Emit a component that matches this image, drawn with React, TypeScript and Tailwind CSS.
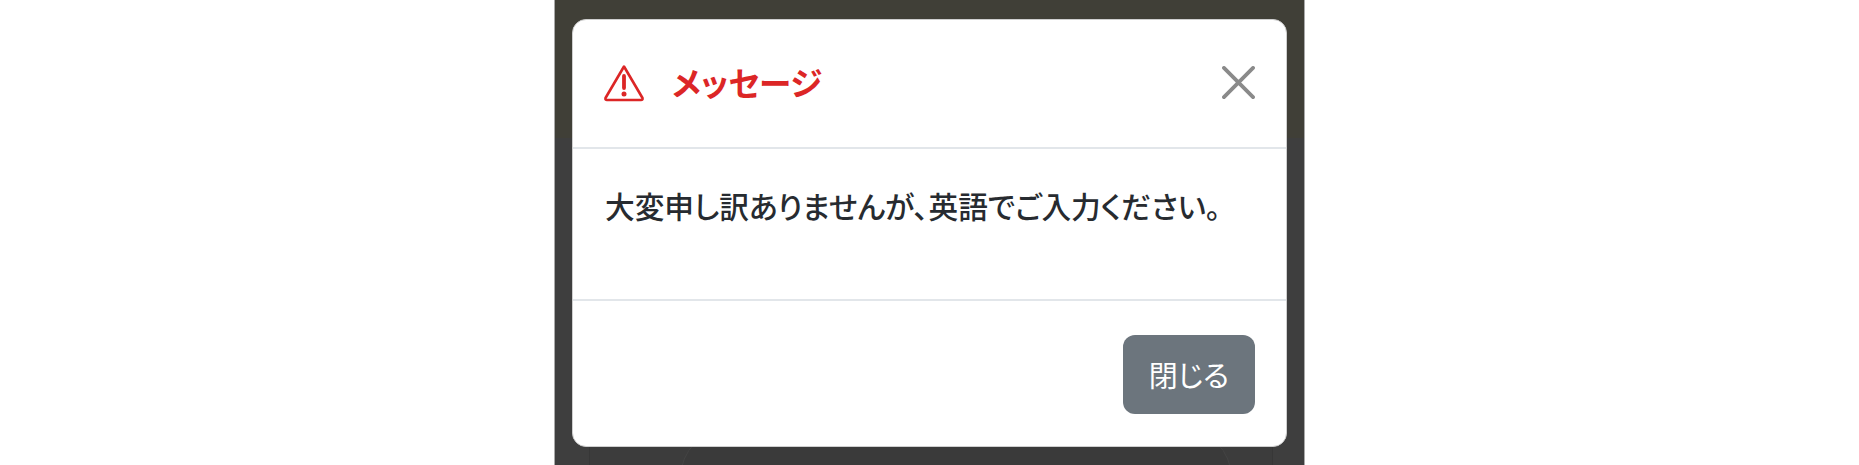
export default function App() {
  return (
    <div className="flex h-[465px] w-full justify-center overflow-hidden bg-white font-['Noto_Sans_CJK_JP',sans-serif] [font-feature-settings:'palt']">
      <div className="relative flex w-[751px] flex-col border-x border-[#a9a9a9] bg-[#3e3e3e]">
        <div className="h-[138px] bg-[#403f37]" />
        <div className="flex-1 overflow-hidden">
          <div className="ml-[34px] mr-[31px] mt-[290px] h-[60px] border-x border-[#373737] bg-[#3c3c3c] pl-[90px] pr-[40px]">
            <div className="h-[60px] rounded-t-[50px] border border-[#444444] bg-[#3a3a3a]" />
          </div>
        </div>
        <div className="absolute left-[17px] top-[19px] flex h-[428px] w-[715px] flex-col rounded-[14px] border border-[#cfcfcf] bg-white">
          <div className="flex h-[129px] items-center justify-between border-b-2 border-[#e2e6ea] pb-[2px] pl-[30px] pr-[31px]">
            <div className="flex items-center gap-[27px]">
              <svg viewBox="0 0 42 38" className="h-[38px] w-[42px]" fill="none">
                <path d="M21 2.5 L39.5 34 Q40 36 38 36 H4 Q2 36 2.5 34 Z" stroke="#dc2626" strokeWidth="2.6" strokeLinejoin="round" />
                <path d="M21 12 V24" stroke="#dc2626" strokeWidth="3.8" strokeLinecap="round" />
                <circle cx="21" cy="30" r="2.5" fill="#dc2626" />
              </svg>
              <h1 className="text-[32.5px] leading-none font-bold text-[#dc2626]">メッセージ</h1>
            </div>
            <svg viewBox="0 0 34 34" className="h-[33px] w-[33px]" fill="none">
              <path d="M2 2 L32 32 M32 2 L2 32" stroke="#8a8a8a" strokeWidth="3.9" strokeLinecap="round" />
            </svg>
          </div>
          <div className="flex h-[152px] items-start border-b-2 border-[#e2e6ea] pl-[32px] pt-[37px]">
            <p className="text-[29.7px] leading-[40px] font-medium text-[#272b30]">大変申し訳ありませんが、英語でご入力ください。</p>
          </div>
          <div className="flex flex-1 items-start justify-end pr-[31px] pt-[34px]">
            <button className="flex h-[79px] w-[132px] items-center justify-center rounded-[12px] bg-[#6c757d] text-[29px] text-white">閉じる</button>
          </div>
        </div>
      </div>
    </div>
  );
}
